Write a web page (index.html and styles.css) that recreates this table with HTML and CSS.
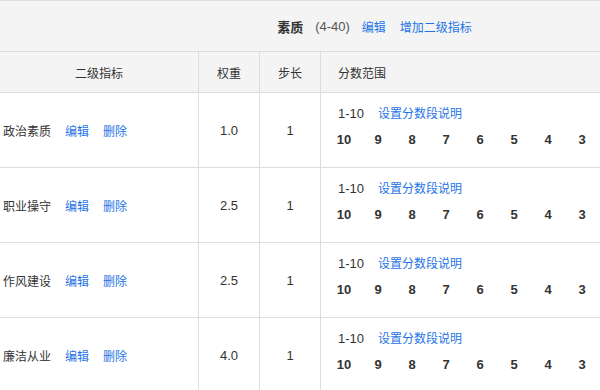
FILE: index.html
```html
<!DOCTYPE html>
<html lang="zh">
<head>
<meta charset="utf-8">
<link rel="stylesheet" href="styles.css">
</head>
<body>
<div class="viewport">
  <div class="sheet">
    <div class="title-bar">
      <span class="title">素质</span>
      <span class="range">(4-40)</span>
      <a class="link title-link">编辑</a>
      <a class="link title-link add">增加二级指标</a>
    </div>
    <div class="grid">
      <div class="cell head c1">二级指标</div>
      <div class="cell head c2">权重</div>
      <div class="cell head c3">步长</div>
      <div class="cell head c4">分数范围</div>

      <div class="cell name"><span>政治素质</span><a class="link op">编辑</a><a class="link op">删除</a></div>
      <div class="cell num">1.0</div>
      <div class="cell num">1</div>
      <div class="cell score">
        <div class="score-top"><span class="span-range">1-10</span><a class="link desc">设置分数段说明</a></div>
        <div class="scores"><span>10</span><span>9</span><span>8</span><span>7</span><span>6</span><span>5</span><span>4</span><span>3</span></div>
      </div>

      <div class="cell name"><span>职业操守</span><a class="link op">编辑</a><a class="link op">删除</a></div>
      <div class="cell num">2.5</div>
      <div class="cell num">1</div>
      <div class="cell score">
        <div class="score-top"><span class="span-range">1-10</span><a class="link desc">设置分数段说明</a></div>
        <div class="scores"><span>10</span><span>9</span><span>8</span><span>7</span><span>6</span><span>5</span><span>4</span><span>3</span></div>
      </div>

      <div class="cell name"><span>作风建设</span><a class="link op">编辑</a><a class="link op">删除</a></div>
      <div class="cell num">2.5</div>
      <div class="cell num">1</div>
      <div class="cell score">
        <div class="score-top"><span class="span-range">1-10</span><a class="link desc">设置分数段说明</a></div>
        <div class="scores"><span>10</span><span>9</span><span>8</span><span>7</span><span>6</span><span>5</span><span>4</span><span>3</span></div>
      </div>

      <div class="cell name"><span>廉洁从业</span><a class="link op">编辑</a><a class="link op">删除</a></div>
      <div class="cell num">4.0</div>
      <div class="cell num">1</div>
      <div class="cell score">
        <div class="score-top"><span class="span-range">1-10</span><a class="link desc">设置分数段说明</a></div>
        <div class="scores"><span>10</span><span>9</span><span>8</span><span>7</span><span>6</span><span>5</span><span>4</span><span>3</span></div>
      </div>
    </div>
  </div>
</div>
</body>
</html>
```
FILE: styles.css
```css
html, body {
  margin: 0;
  padding: 0;
  background: #fff;
  overflow: hidden;
}
body {
  font-family: "Liberation Sans", "Noto Sans CJK SC", sans-serif;
  font-size: 12px;
  color: #333;
}
.viewport {
  width: 600px;
  height: 390px;
  overflow: hidden;
}
.sheet {
  width: 749px;
  border-top: 1px solid #ddd;
}
.title-bar {
  box-sizing: border-box;
  height: 51px;
  background: #f4f4f4;
  border-bottom: 1px solid #ddd;
  display: flex;
  align-items: center;
  justify-content: center;
}
.title {
  font-weight: bold;
  font-size: 13px;
  color: #333;
}
.range {
  margin-left: 12px;
  color: #555;
  font-size: 13px;
}
.link {
  color: #1f74e6;
  text-decoration: none;
}
.title-link {
  margin-left: 12px;
}
.title-link.add {
  margin-left: 14px;
}
.grid {
  display: grid;
  grid-template-columns: 199px 61px 61px 1fr;
  grid-auto-rows: 75px;
  grid-template-rows: 41px;
}
.cell {
  box-sizing: border-box;
  border-right: 1px solid #ddd;
  border-bottom: 1px solid #ddd;
  display: flex;
  align-items: center;
}
.cell.c4, .cell.score {
  border-right: none;
}
.head {
  background: #f4f4f4;
  justify-content: center;
  color: #333;
}
.head.c4 {
  justify-content: flex-start;
  padding-left: 17px;
}
.name {
  padding-left: 3px;
  padding-top: 1px;
}
.op {
  margin-left: 14px;
}
.num {
  justify-content: center;
  font-size: 13px;
  padding-top: 1px;
}
.score {
  flex-direction: column;
  align-items: flex-start;
  justify-content: flex-start;
  padding-top: 12px;
}
.score-top {
  height: 18px;
  line-height: 18px;
  padding-left: 17px;
  display: flex;
}
.span-range {
  font-size: 13px;
}
.desc {
  margin-left: 14px;
}
.scores {
  margin-top: 8px;
  height: 18px;
  line-height: 18px;
  padding-left: 6px;
  display: flex;
  font-weight: bold;
  font-size: 13px;
  color: #333;
}
.scores span {
  width: 34px;
  text-align: center;
}
```
